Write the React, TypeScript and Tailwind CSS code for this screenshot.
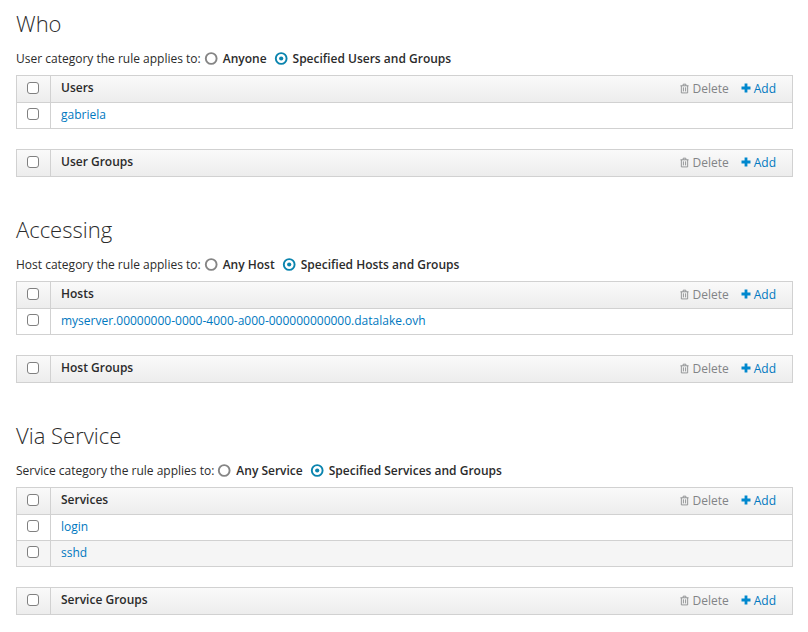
import React from "react";

type Row = string;
type TableProps = { title: string; rows: Row[] };

function Checkbox() {
  return <span role="checkbox" aria-checked="false" className="block size-3 rounded-[3px] border border-[#808080] bg-white" />;
}

function Radio({ checked }: { checked?: boolean }) {
  return (
    <svg viewBox="0 0 13 13" className="mb-px size-[13px] shrink-0 overflow-visible">
      <circle cx="6.2" cy="6.5" r="5.4" fill="#fff" stroke={checked ? "#0a84ae" : "#858585"} strokeWidth="1.9" />
      {checked && <circle cx="6.2" cy="6.5" r="2.1" fill="#0a84ae" />}
    </svg>
  );
}

function Trash() {
  return (
    <svg viewBox="0 0 10 11" className="mr-[3px] mb-px h-[11px] w-[9px]" fill="none" stroke="#8b8d8f" strokeWidth="1">
      <path d="M0.5 2.5H9.5M3.5 2.5V.7H6.5V2.5M1.5 2.5V10.4H8.5V2.5M3.8 4.2V8.7M6.2 4.2V8.7" />
    </svg>
  );
}

function Plus() {
  return (
    <svg viewBox="0 0 10 10" className="mr-[3px] mb-[2px] size-[10px]" fill="#0088ce">
      <path d="M3.6 0.5H6.4V3.6H9.5V6.4H6.4V9.5H3.6V6.4H.5V3.6H3.6Z" />
    </svg>
  );
}

function Table({ title, rows }: TableProps) {
  return (
    <div className="border border-[#d1d1d1]">
      <div className="flex h-[26px] bg-linear-to-b from-[#fafafa] to-[#ededed]">
        <div className="flex w-[34px] border-r border-[#d1d1d1] pt-[6px] pl-[10px]"><Checkbox /></div>
        <div className="flex-1 pl-[10px] leading-[24px] font-semibold">{title}</div>
        <div className="flex h-[26px] items-center pr-4">
          <span className="flex items-center text-[#828486]"><Trash />Delete</span>
          <span className="ml-3 flex items-center text-[#0078c0]"><Plus />Add</span>
        </div>
      </div>
      {rows.map((row, i) => (
        <div key={row} className={`flex h-[26px] border-t border-[#d1d1d1] ${i % 2 ? "bg-[#f5f5f5]" : "bg-white"}`}>
          <div className="flex w-[34px] border-r border-[#d1d1d1] pt-[5px] pl-[10px]"><Checkbox /></div>
          <div className="pl-[10px] leading-[23px] text-[#0078c0]">{row}</div>
        </div>
      ))}
    </div>
  );
}

type SectionProps = { heading: string; label: string; any: string; specified: string; first: TableProps; second: string };

function Section({ heading, label, any, specified, first, second }: SectionProps) {
  return (
    <section className="mb-[39px]">
      <h2 className="h-[27px] text-[22px] leading-[27px] font-light">{heading}</h2>
      <div className="mt-[13px] mb-[7px] flex h-[18px] items-center whitespace-nowrap">
        <span className="mr-1">{label}</span>
        <Radio /><b className="mr-2 ml-[5px] font-semibold">{any}</b>
        <Radio checked /><b className="ml-[5px] font-semibold">{specified}</b>
      </div>
      <Table {...first} />
      <div className="mt-5"><Table title={second} rows={[]} /></div>
    </section>
  );
}

export default function App() {
  return (
    <main className="h-[632px] overflow-hidden bg-white pt-[10px] pr-[15px] pl-4 font-['Open_Sans',sans-serif] text-[12px] text-[#2b2b2b]">
      <Section heading="Who" label="User category the rule applies to:" any="Anyone" specified="Specified Users and Groups" first={{ title: "Users", rows: ["gabriela"] }} second="User Groups" />
      <Section heading="Accessing" label="Host category the rule applies to:" any="Any Host" specified="Specified Hosts and Groups" first={{ title: "Hosts", rows: ["myserver.00000000-0000-4000-a000-000000000000.datalake.ovh"] }} second="Host Groups" />
      <Section heading="Via Service" label="Service category the rule applies to:" any="Any Service" specified="Specified Services and Groups" first={{ title: "Services", rows: ["login", "sshd"] }} second="Service Groups" />
    </main>
  );
}
